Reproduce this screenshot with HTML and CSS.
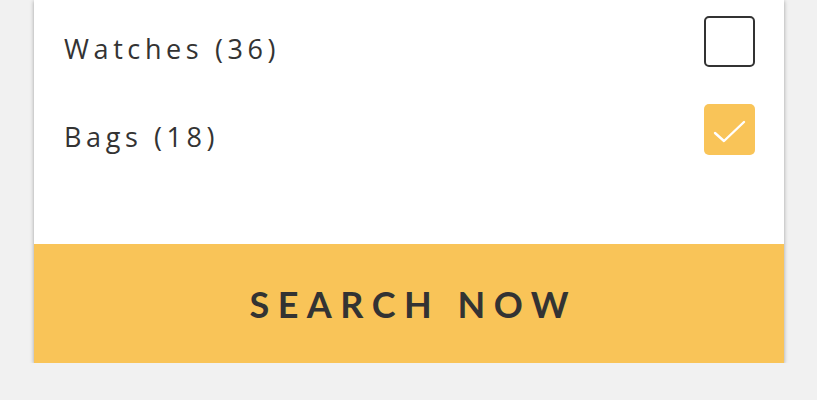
FILE: index.html
```html
<!DOCTYPE html>
<html lang="en">
<head>
  <meta charset="UTF-8">
  <title>Filter</title>
  <link rel="stylesheet" href="styles.css">
</head>
<body>
  <div class="panel">
    <ul class="options">
      <li class="option">
        <span class="option-label">Watches (36)</span>
        <span class="box"></span>
      </li>
      <li class="option">
        <span class="option-label">Bags (18)</span>
        <span class="box checked">
          <svg viewBox="0 0 51 51" width="51" height="51"><path d="M11 29 L20 37 L40 18" fill="none" stroke="#fff" stroke-width="2.4" stroke-linecap="round" stroke-linejoin="round"/></svg>
        </span>
      </li>
    </ul>
    <button class="search-btn">SEARCH NOW</button>
  </div>
</body>
</html>
```

FILE: styles.css
```css
body { margin: 0; background: #f1f1f1; font-family: "Open Sans", sans-serif; }
.panel { width: 750px; margin-left: 34px; background: #fff; box-shadow: 0 1px 4px rgba(0,0,0,.35); }
.options { list-style: none; margin: 0; padding: 16px 29px 90px 30px; display: flex; flex-direction: column; gap: 38px; }
.option { display: flex; justify-content: space-between; align-items: center; height: 50px; }
.option-label { font-size: 27px; letter-spacing: 4.6px; color: #333; padding-top: 14px; }
.box { width: 47px; height: 47px; border: 2px solid #333; border-radius: 5px; display: flex; align-items: center; justify-content: center; }
.box.checked { width: 51px; height: 51px; border: 0; background: #f9c458; }
.search-btn { display: block; width: 100%; height: 119px; border: 0; background: #f9c458; color: #333; font-family: Lato, sans-serif; font-weight: 700; font-size: 36px; letter-spacing: 8.5px; padding: 0 0 0 8.5px; }
```
